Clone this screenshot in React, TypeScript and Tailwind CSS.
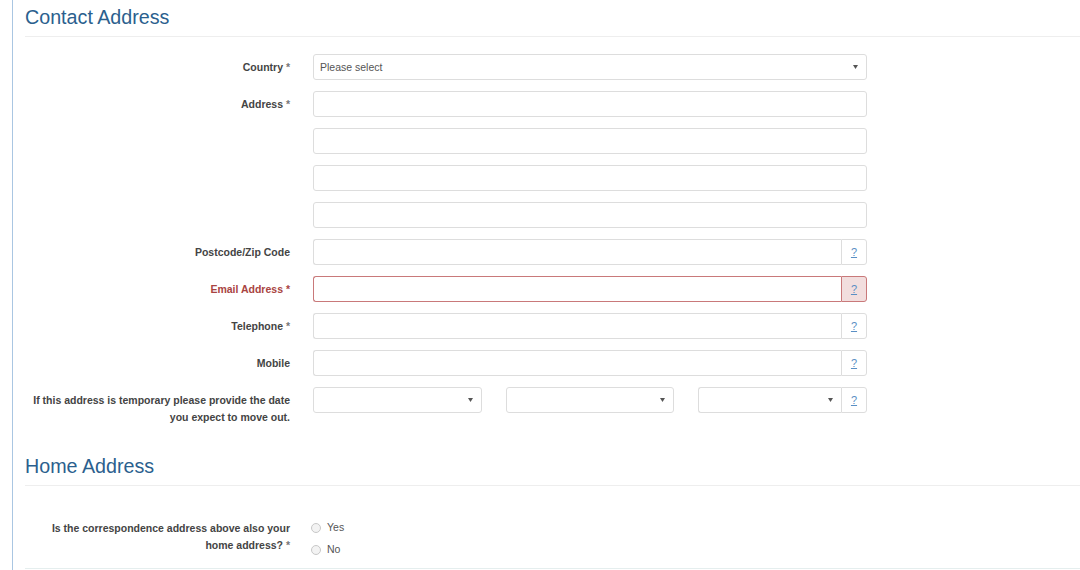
import React from 'react';

const font = { fontFamily: '"Liberation Sans", Arial, sans-serif' };

function Caret() {
  return (
    <svg width="5" height="4" viewBox="0 0 5 4" className="shrink-0">
      <path d="M0 0h5L2.5 4z" fill="#555" />
    </svg>
  );
}

function Label({ children, error, required }: { children: React.ReactNode; error?: boolean; required?: boolean }) {
  return (
    <div
      className={`w-[265px] shrink-0 text-right text-[10.5px] font-bold leading-[17px] pt-[5px] whitespace-nowrap ${
        error ? 'text-[#a94442]' : 'text-[#444]'
      }`}
    >
      {children}
      {required && <span className={error ? 'text-[#a94442]' : 'text-[#777]'}> *</span>}
    </div>
  );
}

function Row({ children }: { children: React.ReactNode }) {
  return <div className="flex mb-[11px]">{children}</div>;
}

function Help({ error }: { error?: boolean }) {
  return (
    <div
      className={`w-[26px] h-[26px] shrink-0 flex items-center justify-center border rounded-r-[3px] text-[11px] underline ${
        error ? 'border-[#c9797a] bg-[#f2dede] text-[#5a8fc4]' : 'border-[#ddd] bg-white text-[#5a8fc4]'
      }`}
    >
      ?
    </div>
  );
}

function Input({ help, error }: { help?: boolean; error?: boolean }) {
  return (
    <div className="flex w-[554px] ml-[23px]">
      <div
        className={`flex-1 h-[26px] border ${
          help ? 'rounded-l-[3px] border-r-0' : 'rounded-[3px]'
        } ${error ? 'border-[#c9797a]' : 'border-[#ddd]'}`}
      />
      {help && <Help error={error} />}
    </div>
  );
}

function Select({ w, text, group }: { w: string; text?: string; group?: boolean }) {
  return (
    <div
      className={`${w} h-[26px] border border-[#ddd] flex items-center justify-between pl-[6px] pr-[8px] text-[10.5px] text-[#555] ${
        group ? 'rounded-l-[3px] border-r-0' : 'rounded-[3px]'
      }`}
    >
      <span className="pt-[1px]">{text}</span>
      <Caret />
    </div>
  );
}

function Heading({ children }: { children: React.ReactNode }) {
  return (
    <>
      <h2 className="text-[19.7px] leading-[24px] text-[#2b5f8e] font-normal">{children}</h2>
      <div className="border-t border-[#eee] mt-[7px]" />
    </>
  );
}

function Radio({ label }: { label: string }) {
  return (
    <div className="flex items-center h-[22px] text-[10.5px] text-[#555]">
      <span className="w-[10px] h-[10px] rounded-full border border-[#c8c8c8] bg-[#f3f3f3] ml-[1px] mr-[6px]" />
      {label}
    </div>
  );
}

export default function App() {
  return (
    <div className="w-[1080px] h-[570px] bg-white overflow-hidden pl-[12px]" style={font}>
      <div className="border-l border-[#aac6e2] pl-[12px] h-full">
        <div className="pt-[5px]">
          <Heading>Contact Address</Heading>
        </div>

        <div className="pt-[17px]">
          <Row>
            <Label required>Country</Label>
            <div className="ml-[23px]">
              <Select w="w-[554px]" text="Please select" />
            </div>
          </Row>
          <Row>
            <Label required>Address</Label>
            <Input />
          </Row>
          <Row>
            <Label>{''}</Label>
            <Input />
          </Row>
          <Row>
            <Label>{''}</Label>
            <Input />
          </Row>
          <Row>
            <Label>{''}</Label>
            <Input />
          </Row>
          <Row>
            <Label>Postcode/Zip Code</Label>
            <Input help />
          </Row>
          <Row>
            <Label error required>Email Address</Label>
            <Input help error />
          </Row>
          <Row>
            <Label required>Telephone</Label>
            <Input help />
          </Row>
          <Row>
            <Label>Mobile</Label>
            <Input help />
          </Row>
          <div className="flex">
            <Label>
              If this address is temporary please provide the date
              <br />
              you expect to move out.
            </Label>
            <div className="flex ml-[23px] gap-[24px] w-[554px]">
              <Select w="w-[169px]" />
              <Select w="w-[168px]" />
              <div className="flex">
                <Select w="w-[143px]" group />
                <Help />
              </div>
            </div>
          </div>
        </div>

        <div className="mt-[28px]">
          <Heading>Home Address</Heading>
        </div>

        <div className="flex pt-[29px]">
          <Label required>
            Is the correspondence address above also your
            <br />
            home address?
          </Label>
          <div className="ml-[20px] mt-[2px]">
            <Radio label="Yes" />
            <Radio label="No" />
          </div>
        </div>
        <div className="border-t border-[#e5eeee] mt-[7px]" />
      </div>
    </div>
  );
}
